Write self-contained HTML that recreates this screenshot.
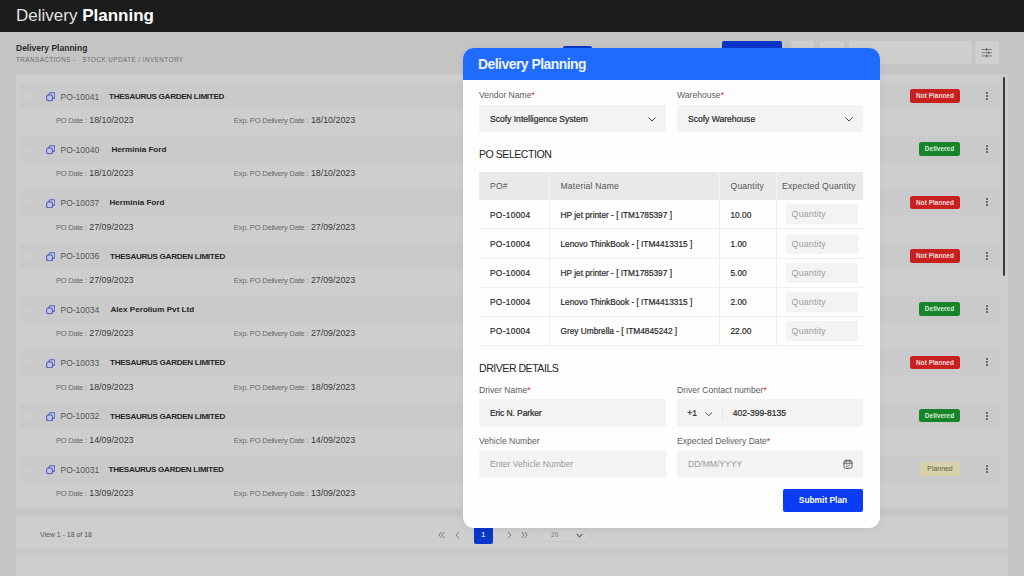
<!DOCTYPE html>
<html>
<head>
<meta charset="utf-8">
<title>Delivery Planning</title>
<style>
*{box-sizing:border-box;margin:0;padding:0}
html,body{width:1024px;height:576px;overflow:hidden}
body{font-family:"Liberation Sans",sans-serif;background:#c4c4c4;position:relative;color:#222}
.abs{position:absolute}
.topbar{left:0;top:0;width:1024px;height:32px;background:#1c1c1c}
.topbar .t{position:absolute;left:16px;top:6px;font-size:17px;color:#e2e2e2;white-space:nowrap;letter-spacing:0}
.topbar .t b{color:#fff}
.ph{left:16px;top:43px;font-size:8.5px;font-weight:bold;color:#2a2a2a;white-space:nowrap}
.bc{left:16px;top:56.3px;font-size:6.3px;color:#6d6d6d;letter-spacing:.46px;white-space:nowrap}
.panel{left:16px;top:74px;width:992px;height:502px;background:#cecece;border-radius:3px 3px 0 0}
.row{position:absolute;left:0;width:990px;height:53.3px}
.row .hd{position:absolute;left:4px;width:980px;top:9px;height:25.7px;background:#cacaca}
.row .ln{position:absolute;left:4px;width:980px;top:56px;height:1px;background:#cacaca}
.row .po{position:absolute;left:44.5px;top:17.6px;font-size:8.5px;color:#555;white-space:nowrap}
.row .nm{position:absolute;top:17.8px;letter-spacing:-.3px;font-size:8.1px;font-weight:bold;color:#262626;white-space:nowrap}
.row .d1{position:absolute;left:40px;top:41px;font-size:7.6px;color:#6a6a6a;white-space:nowrap;letter-spacing:-.3px}
.row .d2{position:absolute;left:217.8px;top:41px;font-size:7.6px;color:#6a6a6a;white-space:nowrap;letter-spacing:-.25px}
.row .d1 span,.row .d2 span{color:#3a3a3a;font-size:8.85px;letter-spacing:0;margin-left:.8px}
.row .ic{position:absolute;left:29.8px;top:18px;width:9.5px;height:9.5px}
.row .cb{position:absolute;left:9px;top:18.6px;width:7px;height:7px;border-radius:2px;background:#cfcfcf}
.badge{position:absolute;height:13.6px;border-radius:2.5px;font-size:6.5px;font-weight:bold;line-height:13.6px;text-align:center;color:#f1d9d9;top:15.1px}
.b-r{left:894px;width:50px;background:#c8201f;color:#f6dede}
.b-g{left:903px;width:41px;background:#17832a;color:#d8f0da}
.b-y{left:904px;width:40px;background:#d8d1aa;color:#5d5a3d;font-weight:normal;font-size:6.9px}
.kebab{position:absolute;left:969.6px;top:17.8px;width:3px;height:10px}
.kebab i{display:block;width:2.1px;height:2.1px;border-radius:50%;background:#484848;margin-bottom:.9px}
.foot{left:16px;top:507px;width:992px;height:50px;background:linear-gradient(#cdcdcd 0,#c4c4c4 3px,#c5c5c5 8px,#cdcdcd 11.5px,#cecece 14px,#cecece 41px,#c6c6c6 43px,#c8c8c8 47px,#cdcdcd 50px)}
.pg{position:absolute;font-size:6.95px;color:#565656;white-space:nowrap}
.pgi{position:absolute;top:24px;height:8px}
.modal{left:463px;top:48px;width:417px;height:480px;border-radius:11px;background:#fefefe;overflow:hidden;box-shadow:0 1px 6px rgba(0,0,0,.07)}
.mh{position:absolute;left:0;top:0;width:100%;height:32px;background:#1f6bfd}
.mh span{position:absolute;left:15px;top:8px;font-size:13.9px;letter-spacing:-.5px;font-weight:bold;color:#eef3ff;white-space:nowrap}
.lbl{position:absolute;font-size:8.6px;color:#5c5c5c;white-space:nowrap}
.lbl em{color:#e02020;font-style:normal}
.fld{-webkit-text-stroke:.22px #2b2b2b;position:absolute;height:27.8px;background:#f3f3f3;border-radius:2px;font-size:8.55px;color:#2b2b2b;line-height:28.8px;padding-left:11px;white-space:nowrap}
.sec{position:absolute;left:16px;letter-spacing:-.5px;font-size:10.6px;color:#262626;white-space:nowrap}
.ph2{color:#9a9a9a;-webkit-text-stroke:0 !important}
table.t{position:absolute;left:16px;top:123.6px;width:384px;border-collapse:collapse;font-size:8.3px;color:#2a2a2a;table-layout:fixed}
table.t th{height:28.3px;background:#e9e9e9;font-weight:normal;color:#555;font-size:8.6px;letter-spacing:.2px;padding-top:1px;text-align:left;padding-left:11px;border-left:1px solid #f3f3f3;white-space:nowrap}
table.t th:first-child{border-left:none}
table.t td{-webkit-text-stroke:.2px #2a2a2a;height:29.1px;padding-top:1px;padding-left:11px;border-bottom:1px solid #efefef;border-left:1px solid #efefef;white-space:nowrap}
table.t td:first-child{border-left:none;letter-spacing:.33px}
.qi{-webkit-text-stroke:0;width:72px;height:20px;background:#f3f3f3;border-radius:2px;color:#9c9c9c;line-height:20.5px;padding-left:5.4px;margin-left:-1.8px;font-size:8.8px;letter-spacing:.2px;margin-top:-1px}
.btn{position:absolute;left:320px;top:440.5px;width:80px;height:23px;background:#0a3cf5;border-radius:2px;color:#fff;font-size:8.4px;font-weight:bold;text-align:center;line-height:23px}
.chev{position:absolute;right:10px;top:12.4px;width:8px;height:5px}
.chev2{display:inline-block;width:8px;height:5px;margin-left:12px;vertical-align:middle;position:relative;top:-1px}
.vsep{display:inline-block;width:1px;height:12px;background:#e2e2e2;margin:0 8px 0 8px;vertical-align:middle}
.ph3{color:#2b2b2b}
.cal{position:absolute;right:10.3px;top:9.4px;width:10px;height:10px}
.tb{top:41px;height:23px;background:#cfcfcf;border-radius:2px}
</style>
</head>
<body>
<div class="abs topbar"><div class="t">Delivery <b>Planning</b></div></div>
<div class="abs ph">Delivery Planning</div>
<div class="abs bc">TRANSACTIONS&nbsp;-&nbsp;&nbsp;&nbsp;STOCK UPDATE&nbsp;/&nbsp;INVENTORY</div>

<div class="abs" style="left:563px;top:46px;width:29px;height:18px;background:#0a36c9;border-radius:2px"></div>
<div class="abs" style="left:722px;top:41px;width:60px;height:23px;background:#0a36c9;border-radius:2px"></div>
<div class="abs tb" style="left:790.5px;width:23px"></div>
<div class="abs tb" style="left:819.5px;width:24px"></div>
<div class="abs tb" style="left:849px;width:122.5px"></div>
<div class="abs tb" style="left:975px;width:23.5px"><svg viewBox="0 0 12 12" style="position:absolute;left:6px;top:6.2px;width:11.5px;height:11.5px"><path d="M.6 2.6H11.4M.6 6H11.4M.6 9.3H11.4" stroke="#5a5a5a" stroke-width=".75" fill="none"/><path d="M5.9 1.3V3.9M8.2 4.7V7.3M5.9 8V10.6" stroke="#444" stroke-width="1" fill="none"/></svg></div>
<div class="abs panel" id="panel">
<div class="row" style="top:0.0px"><div class="hd"></div><div class="ln"></div><div class="cb"></div><svg class="ic" viewBox="0 0 10 10"><rect x="3.2" y="0.7" width="6.1" height="6.1" rx="1.7" fill="#c5c7de" stroke="#4858c2" stroke-width="1.1"/><rect x="0.7" y="3.2" width="6.1" height="6.1" rx="1.7" fill="#bfc2e0" stroke="#4858c2" stroke-width="1.1"/></svg><div class="po">PO-10041</div><div class="nm" style="left:93px">THESAURUS GARDEN LIMITED</div><div class="d1">PO Date : <span>18/10/2023</span></div><div class="d2">Exp. PO Delivery Date : <span>18/10/2023</span></div><div class="badge b-r">Not Planned</div><div class="kebab"><i></i><i></i><i></i></div></div>
<div class="row" style="top:53.3px"><div class="hd"></div><div class="ln"></div><div class="cb"></div><svg class="ic" viewBox="0 0 10 10"><rect x="3.2" y="0.7" width="6.1" height="6.1" rx="1.7" fill="#c5c7de" stroke="#4858c2" stroke-width="1.1"/><rect x="0.7" y="3.2" width="6.1" height="6.1" rx="1.7" fill="#bfc2e0" stroke="#4858c2" stroke-width="1.1"/></svg><div class="po">PO-10040</div><div class="nm" style="left:95.5px;letter-spacing:0">Herminia Ford</div><div class="d1">PO Date : <span>18/10/2023</span></div><div class="d2">Exp. PO Delivery Date : <span>18/10/2023</span></div><div class="badge b-g">Delivered</div><div class="kebab"><i></i><i></i><i></i></div></div>
<div class="row" style="top:106.6px"><div class="hd"></div><div class="ln"></div><div class="cb"></div><svg class="ic" viewBox="0 0 10 10"><rect x="3.2" y="0.7" width="6.1" height="6.1" rx="1.7" fill="#c5c7de" stroke="#4858c2" stroke-width="1.1"/><rect x="0.7" y="3.2" width="6.1" height="6.1" rx="1.7" fill="#bfc2e0" stroke="#4858c2" stroke-width="1.1"/></svg><div class="po">PO-10037</div><div class="nm" style="left:93.5px;letter-spacing:0">Herminia Ford</div><div class="d1">PO Date : <span>27/09/2023</span></div><div class="d2">Exp. PO Delivery Date : <span>27/09/2023</span></div><div class="badge b-r">Not Planned</div><div class="kebab"><i></i><i></i><i></i></div></div>
<div class="row" style="top:159.9px"><div class="hd"></div><div class="ln"></div><div class="cb"></div><svg class="ic" viewBox="0 0 10 10"><rect x="3.2" y="0.7" width="6.1" height="6.1" rx="1.7" fill="#c5c7de" stroke="#4858c2" stroke-width="1.1"/><rect x="0.7" y="3.2" width="6.1" height="6.1" rx="1.7" fill="#bfc2e0" stroke="#4858c2" stroke-width="1.1"/></svg><div class="po">PO-10036</div><div class="nm" style="left:94px">THESAURUS GARDEN LIMITED</div><div class="d1">PO Date : <span>27/09/2023</span></div><div class="d2">Exp. PO Delivery Date : <span>27/09/2023</span></div><div class="badge b-r">Not Planned</div><div class="kebab"><i></i><i></i><i></i></div></div>
<div class="row" style="top:213.2px"><div class="hd"></div><div class="ln"></div><div class="cb"></div><svg class="ic" viewBox="0 0 10 10"><rect x="3.2" y="0.7" width="6.1" height="6.1" rx="1.7" fill="#c5c7de" stroke="#4858c2" stroke-width="1.1"/><rect x="0.7" y="3.2" width="6.1" height="6.1" rx="1.7" fill="#bfc2e0" stroke="#4858c2" stroke-width="1.1"/></svg><div class="po">PO-10034</div><div class="nm" style="left:94.5px;letter-spacing:0">Alex Perolium Pvt Ltd</div><div class="d1">PO Date : <span>27/09/2023</span></div><div class="d2">Exp. PO Delivery Date : <span>27/09/2023</span></div><div class="badge b-g">Delivered</div><div class="kebab"><i></i><i></i><i></i></div></div>
<div class="row" style="top:266.5px"><div class="hd"></div><div class="ln"></div><div class="cb"></div><svg class="ic" viewBox="0 0 10 10"><rect x="3.2" y="0.7" width="6.1" height="6.1" rx="1.7" fill="#c5c7de" stroke="#4858c2" stroke-width="1.1"/><rect x="0.7" y="3.2" width="6.1" height="6.1" rx="1.7" fill="#bfc2e0" stroke="#4858c2" stroke-width="1.1"/></svg><div class="po">PO-10033</div><div class="nm" style="left:94px">THESAURUS GARDEN LIMITED</div><div class="d1">PO Date : <span>18/09/2023</span></div><div class="d2">Exp. PO Delivery Date : <span>18/09/2023</span></div><div class="badge b-r">Not Planned</div><div class="kebab"><i></i><i></i><i></i></div></div>
<div class="row" style="top:319.8px"><div class="hd"></div><div class="ln"></div><div class="cb"></div><svg class="ic" viewBox="0 0 10 10"><rect x="3.2" y="0.7" width="6.1" height="6.1" rx="1.7" fill="#c5c7de" stroke="#4858c2" stroke-width="1.1"/><rect x="0.7" y="3.2" width="6.1" height="6.1" rx="1.7" fill="#bfc2e0" stroke="#4858c2" stroke-width="1.1"/></svg><div class="po">PO-10032</div><div class="nm" style="left:94px">THESAURUS GARDEN LIMITED</div><div class="d1">PO Date : <span>14/09/2023</span></div><div class="d2">Exp. PO Delivery Date : <span>14/09/2023</span></div><div class="badge b-g">Delivered</div><div class="kebab"><i></i><i></i><i></i></div></div>
<div class="row" style="top:373.1px"><div class="hd"></div><div class="ln"></div><div class="cb"></div><svg class="ic" viewBox="0 0 10 10"><rect x="3.2" y="0.7" width="6.1" height="6.1" rx="1.7" fill="#c5c7de" stroke="#4858c2" stroke-width="1.1"/><rect x="0.7" y="3.2" width="6.1" height="6.1" rx="1.7" fill="#bfc2e0" stroke="#4858c2" stroke-width="1.1"/></svg><div class="po">PO-10031</div><div class="nm" style="left:92.5px">THESAURUS GARDEN LIMITED</div><div class="d1">PO Date : <span>13/09/2023</span></div><div class="d2">Exp. PO Delivery Date : <span>13/09/2023</span></div><div class="badge b-y">Planned</div><div class="kebab"><i></i><i></i><i></i></div></div>
</div>
<div class="abs" style="left:1002.5px;top:77px;width:2px;height:199px;background:#3a3a3a;border-radius:1px"></div>
<div class="abs foot" id="foot">
<div class="pg" style="left:24px;top:24px">View 1 - 18 of 18</div>
<svg class="pgi" style="left:421.5px;width:7px" viewBox="0 0 7 8"><path d="M3.4 1L.8 4l2.6 3M6.4 1L3.8 4l2.6 3" fill="none" stroke="#7a7a7a" stroke-width="1"/></svg>
<svg class="pgi" style="left:438.5px;width:5px" viewBox="0 0 5 8"><path d="M4 .8L1 4l3 3.2" fill="none" stroke="#7a7a7a" stroke-width="1"/></svg>
<div style="position:absolute;left:457.7px;top:18.3px;width:19.2px;height:19px;background:#0a36c9;border-radius:2px;color:#fff;font-size:8px;text-align:center;line-height:19px">1</div>
<svg class="pgi" style="left:491px;width:5px" viewBox="0 0 5 8"><path d="M1 .8L4 4 1 7.2" fill="none" stroke="#7a7a7a" stroke-width="1"/></svg>
<svg class="pgi" style="left:505px;width:7px" viewBox="0 0 7 8"><path d="M.6 1l2.6 3L.6 7M3.6 1l2.6 3-2.6 3" fill="none" stroke="#7a7a7a" stroke-width="1"/></svg>
<div style="position:absolute;left:527px;top:21.6px;width:47px;height:13px;background:#d0d0d0;border:1px solid #c9c9c9;border-radius:3px"></div>
<div class="pg" style="left:535px;top:24.2px;font-size:6.6px;color:#7a7a7a">20</div>
<svg class="pgi" style="left:559.5px;top:25.6px;width:7px;height:5px" viewBox="0 0 7 5"><path d="M.7 .9L3.5 3.9 6.3 .9" fill="none" stroke="#686868" stroke-width="1.1"/></svg>
</div>

<div class="abs modal">
  <div class="mh"><span>Delivery Planning</span></div>

  <div class="lbl" style="left:16px;top:42px">Vendor Name<em>*</em></div>
  <div class="lbl" style="left:214px;top:42px">Warehouse<em>*</em></div>
  <div class="fld" style="left:16px;top:56.5px;width:187px">Scofy Intelligence System<svg class="chev" viewBox="0 0 8 5"><path d="M0.7 0.8 L4 4 L7.3 0.8" fill="none" stroke="#444" stroke-width="1" stroke-linecap="round" stroke-linejoin="round"/></svg></div>
  <div class="fld" style="left:214px;top:56.5px;width:186px">Scofy Warehouse<svg class="chev" viewBox="0 0 8 5"><path d="M0.7 0.8 L4 4 L7.3 0.8" fill="none" stroke="#444" stroke-width="1" stroke-linecap="round" stroke-linejoin="round"/></svg></div>
  <div class="sec" style="top:100px">PO SELECTION</div>
  <table class="t"><colgroup><col style="width:70px"><col style="width:170px"><col style="width:57.5px"><col style="width:86.5px"></colgroup>
  <tr><th>PO#</th><th>Material Name</th><th>Quantity</th><th style="padding-left:5px">Expected Quantity</th></tr>
  <tr><td>PO-10004</td><td>HP jet printer - [ ITM1785397 ]</td><td>10.00</td><td><div class="qi">Quantity</div></td></tr>
<tr><td>PO-10004</td><td>Lenovo ThinkBook - [ ITM4413315 ]</td><td>1.00</td><td><div class="qi">Quantity</div></td></tr>
<tr><td>PO-10004</td><td>HP jet printer - [ ITM1785397 ]</td><td>5.00</td><td><div class="qi">Quantity</div></td></tr>
<tr><td>PO-10004</td><td>Lenovo ThinkBook - [ ITM4413315 ]</td><td>2.00</td><td><div class="qi">Quantity</div></td></tr>
<tr><td>PO-10004</td><td>Grey Umbrella - [ ITM4845242 ]</td><td>22.00</td><td><div class="qi">Quantity</div></td></tr>
  </table>
  <div class="sec" style="top:313.7px">DRIVER DETAILS</div>
  <div class="lbl" style="left:16px;top:337px">Driver Name<em>*</em></div>
  <div class="lbl" style="left:214px;top:337px">Driver Contact number<em>*</em></div>
  <div class="fld" style="left:16px;top:351.3px;width:187px;letter-spacing:-.12px">Eric N. Parker</div>
  <div class="fld" style="left:214px;top:351.3px;width:186px;padding-left:10.2px">+1<svg style="position:absolute;left:28px;top:12.6px;width:7.6px;height:4.6px" viewBox="0 0 8 5"><path d="M0.7 0.8 L4 4 L7.3 0.8" fill="none" stroke="#444" stroke-width="1" stroke-linecap="round" stroke-linejoin="round"/></svg><span style="position:absolute;left:45.3px;top:8px;width:1px;height:12px;background:#e4e4e4"></span><span style="position:absolute;left:55.8px;top:0">402-399-8135</span></div>
  <div class="lbl" style="left:16px;top:387.7px">Vehicle Number</div>
  <div class="lbl" style="left:214px;top:387.7px">Expected Delivery Date<em>*</em></div>
  <div class="fld ph2" style="left:16px;top:402px;width:187px">Enter Vehicle Number</div>
  <div class="fld ph2" style="left:214px;top:402px;width:186px">DD/MM/YYYY<svg class="cal" viewBox="0 0 10 10"><rect x="1" y="1.8" width="8" height="7.4" rx="1.6" fill="none" stroke="#444" stroke-width="0.9"/><path d="M1 4.2H9M3.2 0.7V2.6M6.8 0.7V2.6" stroke="#444" stroke-width="0.9" fill="none" stroke-linecap="round"/><path d="M3 6h.9M4.6 6h.9M6.2 6h.9M3 7.5h.9M4.6 7.5h.9" stroke="#444" stroke-width="0.8"/></svg></div>
  <div class="btn">Submit Plan</div>

</div>
</body>
</html>
